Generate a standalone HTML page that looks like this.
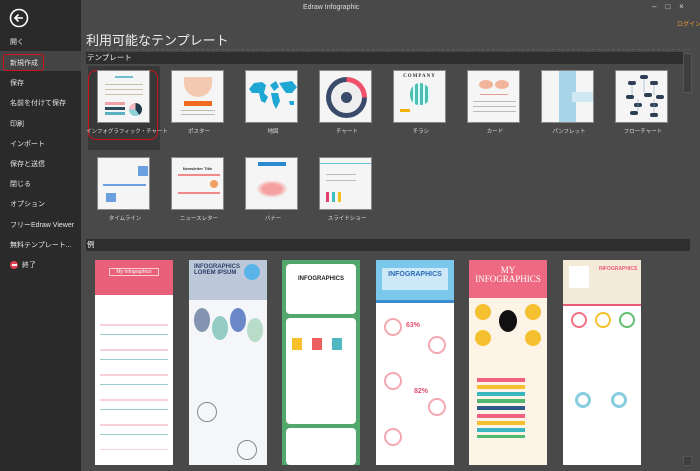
<!DOCTYPE html>
<html><head><meta charset="utf-8"><style>
*{margin:0;padding:0;box-sizing:border-box}
body{width:700px;height:471px;overflow:hidden;background:#4a4949;font-family:"Liberation Sans","Noto Sans CJK JP",sans-serif;position:relative;color:#ddd}
.abs{position:absolute}
#side{left:0;top:0;width:81px;height:471px;background:#2a2a2a}
.mi{position:absolute;left:10px;font-size:7px;color:#e6e6e6;white-space:nowrap}
.tile{position:absolute;width:53px;height:53px;background:#f5f5f5;border:1px solid #888;overflow:hidden}
.lab{position:absolute;width:74px;text-align:center;font-size:5.5px;color:#ddd;white-space:nowrap}
.ex{position:absolute;top:260px;width:78px;height:205px;background:#fff;overflow:hidden}
.ln{position:absolute;height:1px;background:#bbb}
</style></head><body>
<div id="side" class="abs"></div>
<svg class="abs" style="left:9px;top:8px" width="20" height="20" viewBox="0 0 20 20"><circle cx="10" cy="10" r="8.5" fill="none" stroke="#fff" stroke-width="1.6"/><path d="M14 10H6M9.5 6.5L6 10l3.5 3.5" fill="none" stroke="#fff" stroke-width="1.6"/></svg>
<div class="mi" style="top:37px">開く</div>
<div class="abs" style="left:0;top:51px;width:81px;height:20px;background:#444"></div>
<div class="abs" style="left:3px;top:54px;width:41px;height:17px;border:1.5px solid #d0121b;border-radius:3px"></div>
<div class="mi" style="top:58px">新規作成</div>
<div class="mi" style="top:78px">保存</div>
<div class="mi" style="top:98px">名前を付けて保存</div>
<div class="mi" style="top:119px">印刷</div>
<div class="mi" style="top:139px">インポート</div>
<div class="mi" style="top:159px">保存と送信</div>
<div class="mi" style="top:179px">閉じる</div>
<div class="mi" style="top:199px">オプション</div>
<div class="mi" style="top:220px">フリーEdraw Viewer</div>
<div class="mi" style="top:240px">無料テンプレート...</div>
<div class="abs" style="left:10px;top:261px;width:8px;height:8px;border-radius:50%;background:#e04050"><div style="position:absolute;left:1.5px;top:3.3px;width:5px;height:1.4px;background:#fff"></div></div>
<div class="mi" style="top:260px;left:22px">終了</div>

<div class="abs" style="left:303px;top:4px;font-size:7px;color:#ddd">Edraw Infographic</div>
<div class="abs" style="left:652px;top:2px;font-size:8px;color:#ddd;white-space:nowrap">–&nbsp;&nbsp;&nbsp;&nbsp;□&nbsp;&nbsp;&nbsp;&nbsp;×</div>
<div class="abs" style="left:677px;top:19px;font-size:6px;color:#e8a030;white-space:nowrap">ログイン</div>
<div class="abs" style="left:86px;top:30px;font-size:13px;color:#eee">利用可能なテンプレート</div>
<div class="abs" style="left:86px;top:49px;width:604px;border-top:1px dashed #5c5c5c"></div>
<div class="abs" style="left:86px;top:52px;width:597px;height:12px;background:#2e2e2e;font-size:7.5px;color:#eee;padding-left:1px;line-height:12px">テンプレート</div>
<div class="abs" style="left:683px;top:53px;width:9px;height:40px;background:#3e3e3e;border:1px solid #555"></div>
<div class="abs" style="left:88px;top:66px;width:72px;height:84px;background:#383838"></div>
<div class="abs" style="left:88px;top:70px;width:70px;height:70px;border:1.5px solid #d0121b;border-radius:8px"></div>

<div class="tile" style="left:97px;top:70px"><div class="ln" style="left:17px;top:5px;width:18px;height:2px;background:#6cc0d0"></div><div class="ln" style="left:7px;top:13px;width:38px;background:#c8bfa8"></div><div class="ln" style="left:7px;top:18px;width:38px;background:#c8bfa8"></div><div class="ln" style="left:7px;top:23px;width:38px;background:#c8bfa8"></div><div class="ln" style="left:7px;top:31px;width:20px;height:3px;background:#f0a0a8"></div><div class="ln" style="left:7px;top:36px;width:20px;height:3px;background:#2d4a5a"></div><div class="ln" style="left:7px;top:41px;width:20px;height:3px;background:#5ab0c0"></div><div style="position:absolute;left:31px;top:32px;width:13px;height:13px;border-radius:50%;background:conic-gradient(#1e3a4a 0 40%,#8cd0d8 40% 75%,#f4b8c0 75%)"></div></div>
<div class="tile" style="left:171px;top:70px"><div style="position:absolute;left:12px;top:6px;width:28px;height:20px;border-radius:0 0 14px 14px;background:#f3cab0"></div><div style="position:absolute;left:12px;top:30px;width:28px;height:5px;background:#f06a20"></div><div class="ln" style="left:9px;top:39px;width:34px"></div><div class="ln" style="left:9px;top:43px;width:34px"></div></div>
<div class="tile" style="left:245px;top:70px"><svg width="53" height="53"><path d="M3 18 8 12 16 11 20 14 18 22 22 26 19 32 15 30 13 22 6 22Z M24 14 30 10 33 16 28 20Z M25 22 32 22 34 30 30 38 27 32Z M33 12 46 10 51 16 46 22 40 22 37 18Z M43 30 48 30 48 34 44 34Z" fill="#1fa7d4"/></svg></div>
<div class="tile" style="left:319px;top:70px"><div style="position:absolute;left:6px;top:6px;width:41px;height:41px;border-radius:50%;background:conic-gradient(#f0506a 0 25%,#3a4a6a 25%)"></div><div style="position:absolute;left:11px;top:11px;width:31px;height:31px;border-radius:50%;background:#eee"></div><div style="position:absolute;left:21px;top:21px;width:11px;height:11px;border-radius:50%;background:#3a4a6a"></div></div>
<div class="tile" style="left:393px;top:70px"><div style="font:bold 5px 'Liberation Serif';text-align:center;margin-top:3px;color:#333;letter-spacing:1px">COMPANY</div><div style="position:absolute;left:16px;top:12px;width:20px;height:22px;border-radius:50% 50% 45% 45%;background:repeating-linear-gradient(90deg,#4cc0b0 0 3px,#dff 3px 5px)"></div><div style="position:absolute;left:6px;top:38px;width:10px;height:3px;background:#f0b400"></div></div>
<div class="tile" style="left:467px;top:70px"><div style="position:absolute;left:11px;top:9px;width:14px;height:9px;border-radius:50%;background:#f2b49a"></div><div style="position:absolute;left:27px;top:9px;width:14px;height:9px;border-radius:50%;background:#f2b49a"></div><div class="ln" style="left:12px;top:23px;width:28px;background:#e8a090"></div><div class="ln" style="left:5px;top:30px;width:43px"></div><div class="ln" style="left:5px;top:35px;width:43px"></div><div class="ln" style="left:5px;top:40px;width:43px"></div></div>
<div class="tile" style="left:541px;top:70px"><div style="position:absolute;left:17px;top:0;width:17px;height:53px;background:#a8d4e8"></div><div style="position:absolute;left:30px;top:21px;width:22px;height:10px;background:#cfe8f4"></div></div>
<div class="tile" style="left:615px;top:70px"><svg width="53" height="53"><g fill="#2d3e55"><rect x="24" y="4" width="8" height="4" rx="2"/><rect x="12" y="10" width="8" height="4" rx="2"/><rect x="34" y="10" width="8" height="4" rx="2"/><rect x="10" y="24" width="8" height="4" rx="2"/><rect x="28" y="22" width="8" height="4" rx="2"/><rect x="40" y="24" width="8" height="4" rx="2"/><rect x="18" y="32" width="8" height="4" rx="2"/><rect x="34" y="32" width="8" height="4" rx="2"/><rect x="14" y="40" width="8" height="4" rx="2"/><rect x="34" y="42" width="8" height="4" rx="2"/></g><path d="M28 8V22M16 14V24M38 14V24M22 28V40M38 28V42" stroke="#8ab" stroke-width=".6"/></svg></div>

<div class="lab" style="left:86px;top:127px">インフォグラフィック・チャート</div>
<div class="lab" style="left:162px;top:127px">ポスター</div>
<div class="lab" style="left:236px;top:127px">地図</div>
<div class="lab" style="left:310px;top:127px">チャート</div>
<div class="lab" style="left:384px;top:127px">チラシ</div>
<div class="lab" style="left:458px;top:127px">カード</div>
<div class="lab" style="left:532px;top:127px">パンフレット</div>
<div class="lab" style="left:606px;top:127px">フローチャート</div>

<div class="tile" style="left:97px;top:157px"><div style="position:absolute;left:5px;top:26px;width:43px;height:2px;background:#6a9fe0"></div><div style="position:absolute;left:40px;top:8px;width:10px;height:10px;background:#6a9fe0"></div><div style="position:absolute;left:8px;top:35px;width:10px;height:9px;background:#6a9fe0"></div></div>
<div class="tile" style="left:171px;top:157px"><div style="font:bold 4px sans-serif;text-align:center;margin-top:8px;color:#333">Newsletter Title</div><div class="ln" style="left:6px;top:16px;width:42px;height:2px;background:#f08a8a"></div><div class="ln" style="left:6px;top:34px;width:42px;height:2px;background:#f08a8a"></div><div style="position:absolute;left:38px;top:22px;width:8px;height:8px;border-radius:50%;background:#f4a060"></div></div>
<div class="tile" style="left:245px;top:157px"><div class="ln" style="left:12px;top:4px;width:28px;height:4px;background:#2a8ad0"></div><div style="position:absolute;left:10px;top:22px;width:32px;height:18px;background:radial-gradient(#f4a0a0 40%,transparent 70%)"></div></div>
<div class="tile" style="left:319px;top:157px"><div class="ln" style="left:0;top:5px;width:53px;background:#60c8d8"></div><div class="ln" style="left:6px;top:16px;width:30px"></div><div class="ln" style="left:6px;top:22px;width:30px"></div><div style="position:absolute;left:6px;top:34px;width:20px;height:10px;background:linear-gradient(90deg,#e04070 0 3px,transparent 3px 6px,#40c0c0 6px 9px,transparent 9px 12px,#f0c020 12px 15px,transparent 15px)"></div></div>
<div class="lab" style="left:88px;top:214px">タイムライン</div>
<div class="lab" style="left:162px;top:214px">ニュースレター</div>
<div class="lab" style="left:236px;top:214px">バナー</div>
<div class="lab" style="left:310px;top:214px">スライドショー</div>

<div class="abs" style="left:86px;top:239px;width:604px;height:12px;background:#2e2e2e;font-size:7.5px;color:#eee;line-height:12px;padding-left:1px">例</div>
<div class="abs" style="left:683px;top:456px;width:9px;height:10px;background:#3e3e3e;border:1px solid #555"></div>

<div class="ex" style="left:95px;background:linear-gradient(#e8607a 0 35px,#fff 35px)"><div style="position:absolute;left:14px;top:8px;width:50px;height:8px;border:1px solid #fcc;color:#fff;font-size:5px;text-align:center">My Infographics</div><div style="position:absolute;left:5px;top:50px;width:68px;height:140px;background:repeating-linear-gradient(#fff 0 14px,#f8d0d8 14px 16px,#fff 16px 24px,#9cc 24px 25px)"></div></div>
<div class="ex" style="left:189px;background:linear-gradient(#bcc8da 0 40px,#f4f6fa 40px)"><div style="position:absolute;left:5px;top:4px;font:bold 6px sans-serif;color:#2d3e66">INFOGRAPHICS<br>LOREM IPSUM</div><div style="position:absolute;left:55px;top:4px;width:16px;height:16px;border-radius:50%;background:#5bb4e8"></div><div style="position:absolute;left:5px;top:48px;width:16px;height:24px;border-radius:50%;background:#8494b0"></div><div style="position:absolute;left:23px;top:56px;width:16px;height:24px;border-radius:50%;background:#94ccc4"></div><div style="position:absolute;left:41px;top:48px;width:16px;height:24px;border-radius:50%;background:#6a88c8"></div><div style="position:absolute;left:58px;top:58px;width:16px;height:24px;border-radius:50%;background:#b8dcc8"></div><div style="position:absolute;left:8px;top:142px;width:20px;height:20px;border-radius:50%;border:1px solid #888"></div><div style="position:absolute;left:48px;top:180px;width:20px;height:20px;border-radius:50%;border:1px solid #888"></div></div>
<div class="ex" style="left:282px;background:#52a86c"><div style="position:absolute;left:4px;top:4px;width:70px;height:50px;background:#fff;border-radius:4px;font:bold 6px sans-serif;color:#222;text-align:center;padding-top:12px">INFOGRAPHICS</div><div style="position:absolute;left:4px;top:58px;width:70px;height:106px;background:#fff;border-radius:4px"></div><div style="position:absolute;left:10px;top:78px;width:10px;height:12px;background:#f5c02a"></div><div style="position:absolute;left:30px;top:78px;width:10px;height:12px;background:#ee6060"></div><div style="position:absolute;left:50px;top:78px;width:10px;height:12px;background:#4fb8c0"></div><div style="position:absolute;left:4px;top:168px;width:70px;height:37px;background:#fff;border-radius:4px"></div></div>
<div class="ex" style="left:376px;background:linear-gradient(#7cc8ec 0 40px,#3a8ad0 40px 43px,#fff 43px)"><div style="position:absolute;left:6px;top:8px;width:66px;height:22px;background:#cde8f6;font:bold 7px sans-serif;color:#2a6ab8;text-align:center;padding-top:3px">INFOGRAPHICS</div><div style="position:absolute;left:8px;top:58px;width:18px;height:18px;border-radius:50%;border:2px solid #f4a8b0"></div><div style="position:absolute;left:52px;top:76px;width:18px;height:18px;border-radius:50%;border:2px solid #f4a8b0"></div><div style="position:absolute;left:8px;top:112px;width:18px;height:18px;border-radius:50%;border:2px solid #f4a8b0"></div><div style="position:absolute;left:52px;top:138px;width:18px;height:18px;border-radius:50%;border:2px solid #f4a8b0"></div><div style="position:absolute;left:8px;top:168px;width:18px;height:18px;border-radius:50%;border:2px solid #f4a8b0"></div><div style="position:absolute;left:30px;top:62px;font:bold 7px sans-serif;color:#e05070">63%</div><div style="position:absolute;left:38px;top:128px;font:bold 7px sans-serif;color:#e05070">82%</div></div>
<div class="ex" style="left:469px;background:linear-gradient(#ee6a82 0 38px,#fdf3e6 38px)"><div style="position:absolute;left:0;top:6px;width:78px;font:9px 'Liberation Serif';color:#fff;text-align:center;line-height:9px">MY<br>INFOGRAPHICS</div><div style="position:absolute;left:6px;top:44px;width:16px;height:16px;border-radius:50%;background:#f5c030"></div><div style="position:absolute;left:56px;top:44px;width:16px;height:16px;border-radius:50%;background:#f5c030"></div><div style="position:absolute;left:6px;top:70px;width:16px;height:16px;border-radius:50%;background:#f5c030"></div><div style="position:absolute;left:56px;top:70px;width:16px;height:16px;border-radius:50%;background:#f5c030"></div><div style="position:absolute;left:30px;top:50px;width:18px;height:22px;border-radius:50%;background:#111"></div><div style="position:absolute;left:8px;top:118px;width:48px;height:60px;background:repeating-linear-gradient(#f06080 0 4px,transparent 4px 7px,#f5c030 7px 11px,transparent 11px 14px,#3ab8c0 14px 18px,transparent 18px 21px,#50b870 21px 25px,transparent 25px 28px,#2d5a8a 28px 32px,transparent 32px 36px)"></div></div>
<div class="ex" style="left:563px;background:linear-gradient(#f4ead8 0 44px,#e85a78 44px 46px,#fff 46px)"><div style="position:absolute;left:36px;top:6px;font:bold 5px sans-serif;color:#e85a78">INFOGRAPHICS</div><div style="position:absolute;left:6px;top:6px;width:20px;height:22px;background:#fff"></div><div style="position:absolute;left:8px;top:52px;width:16px;height:16px;border-radius:50%;border:2px solid #f07080"></div><div style="position:absolute;left:32px;top:52px;width:16px;height:16px;border-radius:50%;border:2px solid #f5c030"></div><div style="position:absolute;left:56px;top:52px;width:16px;height:16px;border-radius:50%;border:2px solid #60c070"></div><div style="position:absolute;left:12px;top:132px;width:16px;height:16px;border-radius:50%;border:3px solid #8cd"></div><div style="position:absolute;left:48px;top:132px;width:16px;height:16px;border-radius:50%;border:3px solid #8cd"></div></div>
</body></html>
